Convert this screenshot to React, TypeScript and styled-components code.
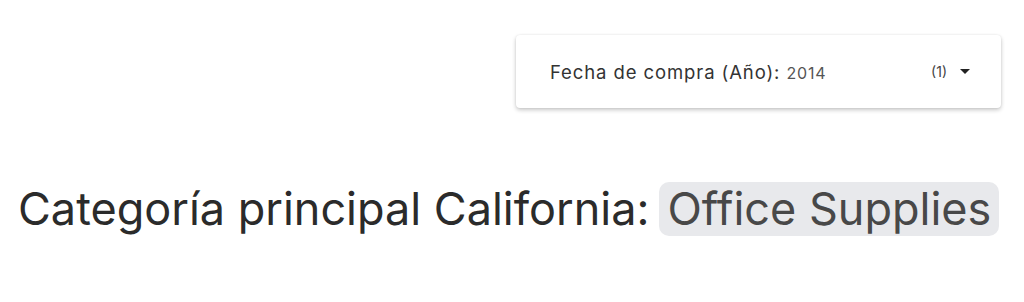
import React from 'react';
import styled, {createGlobalStyle} from 'styled-components';

const GlobalStyle = createGlobalStyle`
  html, body {
    margin: 0;
    padding: 0;
    background: #fff;
  }
  body {
    font-family: Inter, "Noto Sans", sans-serif;
    color: #2b2b2b;
  }
`;

const Page = styled.div`
  width: 1024px;
  height: 302px;
  box-sizing: border-box;
  padding: 35px 23px 0 18px;
`;

const FilterRow = styled.div`
  display: flex;
  justify-content: flex-end;
`;

const FilterCard = styled.div`
  width: 485px;
  height: 73px;
  box-sizing: border-box;
  padding: 0 31px 0 34px;
  display: flex;
  align-items: center;
  background: #fff;
  border-radius: 4px;
  box-shadow: 0 2px 4px rgba(0, 0, 0, 0.22), 0 0 2px rgba(0, 0, 0, 0.08);
`;

const FilterLabel = styled.span`
  font-size: 18.5px;
  letter-spacing: 0.9px;
  color: #333;
  flex: 1;
`;

const FilterValue = styled.span`
  font-size: 16px;
  letter-spacing: 0.8px;
  color: #555;
`;

const Count = styled.span`
  font-size: 14px;
  color: #444;
  margin-right: 13px;
`;

const Caret = styled.span`
  width: 0;
  height: 0;
  border-left: 5px solid transparent;
  border-right: 5px solid transparent;
  border-top: 5px solid #222;
`;

const Heading = styled.h2`
  margin: 73px 0 0;
  font-size: 45px;
  font-weight: 400;
  line-height: 56px;
  color: #2b2b2b;
  display: flex;
  align-items: center;
  white-space: nowrap;
`;

const Chip = styled.span`
  margin-left: 10px;
  padding: 0 8px;
  height: 54px;
  display: inline-flex;
  align-items: center;
  border-radius: 10px;
  background: #e8e9ec;
  color: #484848;
`;

export default function App() {
  return (
    <Page>
      <GlobalStyle/>
      <FilterRow>
        <FilterCard>
          <FilterLabel>
            Fecha de compra (Año): <FilterValue>2014</FilterValue>
          </FilterLabel>
          <Count>(1)</Count>
          <Caret/>
        </FilterCard>
      </FilterRow>
      <Heading>
        Categoría principal California:
        <Chip>Office Supplies</Chip>
      </Heading>
    </Page>
  );
}
